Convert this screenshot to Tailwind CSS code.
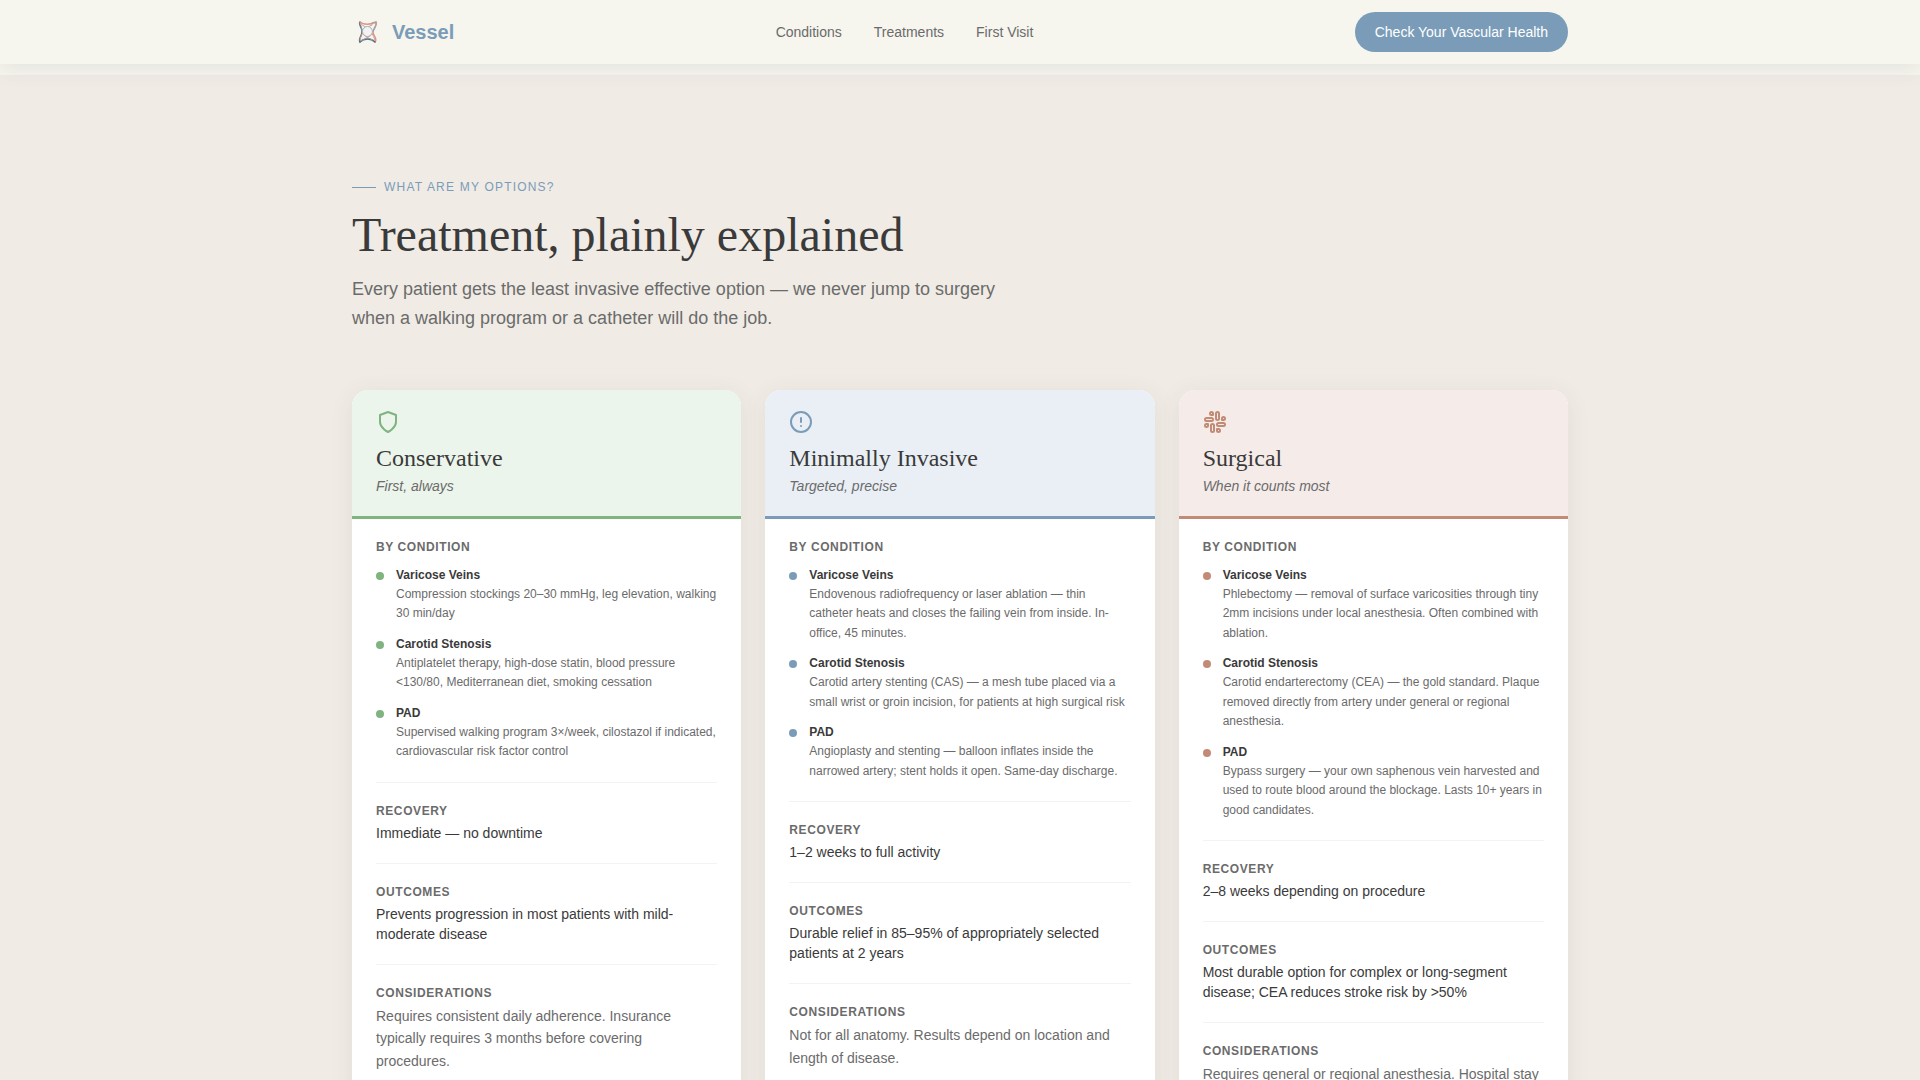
<!DOCTYPE html>
<html lang="en">

<head>
    <meta charset="UTF-8" />
    <meta name="viewport" content="width=device-width, initial-scale=1.0" />
    <title>Vessel - Treatments</title>
    <script src="https://cdn.jsdelivr.net/npm/@tailwindcss/browser@4"></script>
</head>

<body class="bg-[#f0ebe5] font-['Liberation_Sans',Arial,sans-serif] text-[#3a3a3a] h-screen overflow-hidden">

    <!-- Navbar -->
    <header class="relative z-10 bg-[#f6f5ee] shadow-[0_4px_20px_rgba(60,70,80,0.1)]">
        <div class="max-w-7xl mx-auto px-8 h-16 flex justify-between items-center">
            <a href="#" class="flex items-center gap-2">
                <svg class="w-8 h-8" viewBox="0 0 32 32" fill="none" stroke-linecap="round">
                    <path d="M8 6C6 9 11 12 10 16C10 20 6 23 8 26" stroke="#5b6d79" stroke-width="1.5" />
                    <path d="M24 6C26 9 21 12 21 16C21 20 26 23 23 26" stroke="#dc9488" stroke-width="1.5" />
                    <path d="M8 6C11 9 19 9 24 6" stroke="#dc9488" stroke-width="1.500" />
                    <path d="M8 26C12 22 19 22 23 26" stroke="#5b6d79" stroke-width="1.500" />
                    <path d="M8 8C10 9 20 13 23 24M8 24C9 17 14 11 20 9" stroke="#d99a91" stroke-width="1" />
                    <path d="M20 7C22 6 24 6 24 8C23 16 17 21 9 25M9 10C10 18 15 22 21 24" stroke="#8aa9bb" stroke-width="1" />
                    <circle cx="15.500" cy="15.500" r="5" fill="#f4f3f1" stroke="#9eb3c2" stroke-width="1" />
                    <path d="M11 18A5 5 0 0 0 20 18" stroke="#d9aaa0" stroke-width="1" />
                </svg>
                <span class="text-xl font-bold text-[#7a9cb8]">Vessel</span>
            </a>
            <nav>
                <ul class="flex gap-8 text-sm text-[#6b6b6b]">
                    <li><a href="#conditions">Conditions</a></li>
                    <li><a href="#treatments">Treatments</a></li>
                    <li><a href="#visit">First Visit</a></li>
                </ul>
            </nav>
            <button class="h-10 px-5 rounded-full bg-[#7a9cb8] text-white text-sm">Check Your Vascular Health</button>
        </div>
    </header>

    <!-- End of the previous section -->
    <div class="h-[11px] bg-[#f6f5ee]"></div>

    <!-- Treatments -->
    <main id="treatments" class="pt-24">
        <div class="max-w-7xl mx-auto px-8">
            <div class="pt-2 max-w-2xl">
                <p class="flex items-center gap-2 text-xs tracking-widest uppercase text-[#7a9cb8]">
                    <span class="w-6 h-px bg-[#7a9cb8]"></span>What are my options?
                </p>
                <h1 class="mt-3 font-['Liberation_Serif',serif] text-5xl leading-[56px]">Treatment, plainly explained</h1>
                <p class="mt-3 text-lg leading-relaxed text-[#6b6b6b]">Every patient gets the least invasive effective option — we never jump to surgery when a walking program or a catheter will do the job.</p>
            </div>

            <div class="mt-14 grid grid-cols-3 gap-6">
                <!-- Conservative -->
                <article class="bg-white rounded-2xl overflow-hidden shadow-[0_4px_24px_rgba(60,70,60,0.08)]">
                    <div class="px-6 py-5 bg-[#ebf5eb] border-b-3 border-[#7fb380]">
                        <svg class="w-6 h-6 mb-2 text-[#7fb380]" viewBox="0 0 24 24" fill="none" stroke="currentColor" stroke-width="2" stroke-linecap="round" stroke-linejoin="round">
                            <path d="M12 22s8-4 8-10V5l-8-3-8 3v7c0 6 8 10 8 10z" />
                        </svg>
                        <h2 class="font-['Liberation_Serif',serif] text-2xl">Conservative</h2>
                        <p class="mt-0.5 text-sm italic text-[#6b6b6b]">First, always</p>
                    </div>
                    <div class="px-6 py-5 space-y-5">
                        <div>
                            <h3 class="mb-3 text-xs font-bold tracking-wider uppercase text-[#6b6b6b]">By condition</h3>
                            <ul class="space-y-3 text-xs">
                                <li class="flex gap-3">
                                    <span class="mt-[5px] size-2 shrink-0 rounded-full bg-[#7fb380]"></span>
                                    <div>
                                        <h4 class="font-bold leading-4">Varicose Veins</h4>
                                        <p class="mt-0.5 leading-relaxed text-[#6b6b6b]">Compression stockings 20–30 mmHg, leg elevation, walking 30 min/day</p>
                                    </div>
                                </li>
                                <li class="flex gap-3">
                                    <span class="mt-[5px] size-2 shrink-0 rounded-full bg-[#7fb380]"></span>
                                    <div>
                                        <h4 class="font-bold leading-4">Carotid Stenosis</h4>
                                        <p class="mt-0.5 leading-relaxed text-[#6b6b6b]">Antiplatelet therapy, high-dose statin, blood pressure &lt;130/80, Mediterranean diet, smoking cessation</p>
                                    </div>
                                </li>
                                <li class="flex gap-3">
                                    <span class="mt-[5px] size-2 shrink-0 rounded-full bg-[#7fb380]"></span>
                                    <div>
                                        <h4 class="font-bold leading-4">PAD</h4>
                                        <p class="mt-0.5 leading-relaxed text-[#6b6b6b]">Supervised walking program 3×/week, cilostazol if indicated, cardiovascular risk factor control</p>
                                    </div>
                                </li>
                            </ul>
                        </div>
                        <div class="pt-5 border-t border-[#f3f3f3]">
                            <h3 class="mb-1 text-xs font-bold tracking-wider uppercase text-[#6b6b6b]">Recovery</h3>
                            <p class="text-sm">Immediate — no downtime</p>
                        </div>
                        <div class="pt-5 border-t border-[#f3f3f3]">
                            <h3 class="mb-1 text-xs font-bold tracking-wider uppercase text-[#6b6b6b]">Outcomes</h3>
                            <p class="text-sm">Prevents progression in most patients with mild-moderate disease</p>
                        </div>
                        <div class="pt-5 border-t border-[#f3f3f3]">
                            <h3 class="mb-1 text-xs font-bold tracking-wider uppercase text-[#6b6b6b]">Considerations</h3>
                            <p class="text-sm leading-relaxed text-[#6b6b6b]">Requires consistent daily adherence. Insurance typically requires 3 months before covering procedures.</p>
                        </div>
                    </div>
                </article>

                <!-- Minimally Invasive -->
                <article class="bg-white rounded-2xl overflow-hidden shadow-[0_4px_24px_rgba(60,70,60,0.08)]">
                    <div class="px-6 py-5 bg-[#e9eff5] border-b-3 border-[#7a9cb8]">
                        <svg class="w-6 h-6 mb-2 text-[#7a9cb8]" viewBox="0 0 24 24" fill="none" stroke="currentColor" stroke-width="2" stroke-linecap="round" stroke-linejoin="round">
                            <circle cx="12" cy="12" r="10" />
                            <path d="M12 8v4M12 16h.01" />
                        </svg>
                        <h2 class="font-['Liberation_Serif',serif] text-2xl">Minimally Invasive</h2>
                        <p class="mt-0.5 text-sm italic text-[#6b6b6b]">Targeted, precise</p>
                    </div>
                    <div class="px-6 py-5 space-y-5">
                        <div>
                            <h3 class="mb-3 text-xs font-bold tracking-wider uppercase text-[#6b6b6b]">By condition</h3>
                            <ul class="space-y-3 text-xs">
                                <li class="flex gap-3">
                                    <span class="mt-[5px] size-2 shrink-0 rounded-full bg-[#7a9cb8]"></span>
                                    <div>
                                        <h4 class="font-bold leading-4">Varicose Veins</h4>
                                        <p class="mt-0.5 leading-relaxed text-[#6b6b6b]">Endovenous radiofrequency or laser ablation — thin catheter heats and closes the failing vein from inside. In-office, 45 minutes.</p>
                                    </div>
                                </li>
                                <li class="flex gap-3">
                                    <span class="mt-[5px] size-2 shrink-0 rounded-full bg-[#7a9cb8]"></span>
                                    <div>
                                        <h4 class="font-bold leading-4">Carotid Stenosis</h4>
                                        <p class="mt-0.5 leading-relaxed text-[#6b6b6b]">Carotid artery stenting (CAS) — a mesh tube placed via a small wrist or groin incision, for patients at high surgical risk</p>
                                    </div>
                                </li>
                                <li class="flex gap-3">
                                    <span class="mt-[5px] size-2 shrink-0 rounded-full bg-[#7a9cb8]"></span>
                                    <div>
                                        <h4 class="font-bold leading-4">PAD</h4>
                                        <p class="mt-0.5 leading-relaxed text-[#6b6b6b]">Angioplasty and stenting — balloon inflates inside the narrowed artery; stent holds it open. Same-day discharge.</p>
                                    </div>
                                </li>
                            </ul>
                        </div>
                        <div class="pt-5 border-t border-[#f3f3f3]">
                            <h3 class="mb-1 text-xs font-bold tracking-wider uppercase text-[#6b6b6b]">Recovery</h3>
                            <p class="text-sm">1–2 weeks to full activity</p>
                        </div>
                        <div class="pt-5 border-t border-[#f3f3f3]">
                            <h3 class="mb-1 text-xs font-bold tracking-wider uppercase text-[#6b6b6b]">Outcomes</h3>
                            <p class="text-sm">Durable relief in 85–95% of appropriately selected patients at 2 years</p>
                        </div>
                        <div class="pt-5 border-t border-[#f3f3f3]">
                            <h3 class="mb-1 text-xs font-bold tracking-wider uppercase text-[#6b6b6b]">Considerations</h3>
                            <p class="text-sm leading-relaxed text-[#6b6b6b]">Not for all anatomy. Results depend on location and length of disease.</p>
                        </div>
                    </div>
                </article>

                <!-- Surgical -->
                <article class="bg-white rounded-2xl overflow-hidden shadow-[0_4px_24px_rgba(60,70,60,0.08)]">
                    <div class="px-6 py-5 bg-[#f5ece9] border-b-3 border-[#c28b76]">
                        <svg class="w-6 h-6 mb-2 text-[#c28b76]" viewBox="0 0 24 24" fill="none" stroke="currentColor" stroke-width="2" stroke-linecap="round" stroke-linejoin="round">
                            <rect width="3" height="8" x="13" y="2" rx="1.5" />
                            <path d="M19 8.500V10h1.500A1.500 1.500 0 1 0 19 8.500" />
                            <rect width="3" height="8" x="8" y="14" rx="1.5" />
                            <path d="M5 15.500V14H3.500A1.500 1.500 0 1 0 5 15.500" />
                            <rect width="8" height="3" x="14" y="13" rx="1.5" />
                            <path d="M15.500 19H14v1.500a1.500 1.500 0 1 0 1.500-1.500" />
                            <rect width="8" height="3" x="2" y="8" rx="1.5" />
                            <path d="M8.500 5H10V3.500A1.500 1.500 0 1 0 8.500 5" />
                        </svg>
                        <h2 class="font-['Liberation_Serif',serif] text-2xl">Surgical</h2>
                        <p class="mt-0.5 text-sm italic text-[#6b6b6b]">When it counts most</p>
                    </div>
                    <div class="px-6 py-5 space-y-5">
                        <div>
                            <h3 class="mb-3 text-xs font-bold tracking-wider uppercase text-[#6b6b6b]">By condition</h3>
                            <ul class="space-y-3 text-xs">
                                <li class="flex gap-3">
                                    <span class="mt-[5px] size-2 shrink-0 rounded-full bg-[#c28b76]"></span>
                                    <div>
                                        <h4 class="font-bold leading-4">Varicose Veins</h4>
                                        <p class="mt-0.5 leading-relaxed text-[#6b6b6b]">Phlebectomy — removal of surface varicosities through tiny 2mm incisions under local anesthesia. Often combined with ablation.</p>
                                    </div>
                                </li>
                                <li class="flex gap-3">
                                    <span class="mt-[5px] size-2 shrink-0 rounded-full bg-[#c28b76]"></span>
                                    <div>
                                        <h4 class="font-bold leading-4">Carotid Stenosis</h4>
                                        <p class="mt-0.5 leading-relaxed text-[#6b6b6b]">Carotid endarterectomy (CEA) — the gold standard. Plaque removed directly from artery under general or regional anesthesia.</p>
                                    </div>
                                </li>
                                <li class="flex gap-3">
                                    <span class="mt-[5px] size-2 shrink-0 rounded-full bg-[#c28b76]"></span>
                                    <div>
                                        <h4 class="font-bold leading-4">PAD</h4>
                                        <p class="mt-0.5 leading-relaxed text-[#6b6b6b]">Bypass surgery — your own saphenous vein harvested and used to route blood around the blockage. Lasts 10+ years in good candidates.</p>
                                    </div>
                                </li>
                            </ul>
                        </div>
                        <div class="pt-5 border-t border-[#f3f3f3]">
                            <h3 class="mb-1 text-xs font-bold tracking-wider uppercase text-[#6b6b6b]">Recovery</h3>
                            <p class="text-sm">2–8 weeks depending on procedure</p>
                        </div>
                        <div class="pt-5 border-t border-[#f3f3f3]">
                            <h3 class="mb-1 text-xs font-bold tracking-wider uppercase text-[#6b6b6b]">Outcomes</h3>
                            <p class="text-sm">Most durable option for complex or long-segment disease; CEA reduces stroke risk by &gt;50%</p>
                        </div>
                        <div class="pt-5 border-t border-[#f3f3f3]">
                            <h3 class="mb-1 text-xs font-bold tracking-wider uppercase text-[#6b6b6b]">Considerations</h3>
                            <p class="text-sm leading-relaxed text-[#6b6b6b]">Requires general or regional anesthesia. Hospital stay</p>
                        </div>
                    </div>
                </article>
            </div>
        </div>
    </main>

</body>

</html>
